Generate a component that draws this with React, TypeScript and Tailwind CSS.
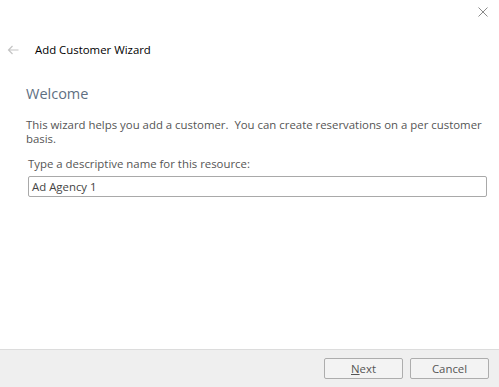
import React from "react";

export default function App() {
  return (
    <div
      className="w-[499px] h-[387px] bg-white flex flex-col overflow-hidden"
      style={{ fontFamily: '"Open Sans", "Noto Sans", sans-serif' }}
    >
      <div className="flex justify-end h-[41px] pr-[11px] pt-[7px]">
        <svg width="10" height="10" viewBox="0 0 10 10" className="block">
          <path d="M0.5 0.5 L9.5 9.5 M9.5 0.5 L0.5 9.5" stroke="#8a8a8a" strokeWidth="1" />
        </svg>
      </div>
      <div className="flex items-center h-[18px]">
        <svg width="12" height="10" viewBox="0 0 12 10" className="ml-[7px] block">
          <path d="M11.5 5 H1.5 M5.5 1 L1.5 5 L5.5 9" stroke="#c4c4c4" strokeWidth="1.2" fill="none" />
        </svg>
        <span className="ml-[16px] text-[11.4px] text-black leading-[18px]">Add Customer Wizard</span>
      </div>
      <div className="flex-1 px-[26px] pt-[25px]">
        <div className="text-[14.5px] leading-[20px] text-[#5f6f82]">Welcome</div>
        <p className="mt-[14px] text-[11.4px] leading-[14px] text-[#555555] whitespace-nowrap">
          This wizard helps you add a customer.&nbsp; You can create reservations on a per customer
          <br />
          basis.
        </p>
        <div className="mt-[10px] ml-[2px] text-[11.4px] leading-[16px] text-[#555555]">
          Type a descriptive name for this resource:
        </div>
        <div className="mt-[4px] ml-[2px] mr-[-14px] h-[21px] border border-[#a9a9a9] rounded-[2px] flex items-center px-[3px] text-[11.4px] text-[#444444]">
          Ad Agency 1
        </div>
      </div>
      <div className="h-[38px] bg-[#efefef] border-t border-[#dcdcdc] flex justify-end items-center gap-[7px] pr-[10px]">
        <button className="w-[79px] h-[21px] border border-[#adadad] rounded-[2px] bg-[#f3f3f3] text-[11.4px] text-[#555555] leading-none">
          <span className="underline">N</span>ext
        </button>
        <button className="w-[79px] h-[21px] border border-[#adadad] rounded-[2px] bg-[#f3f3f3] text-[11.4px] text-[#555555] leading-none">
          Cancel
        </button>
      </div>
    </div>
  );
}
